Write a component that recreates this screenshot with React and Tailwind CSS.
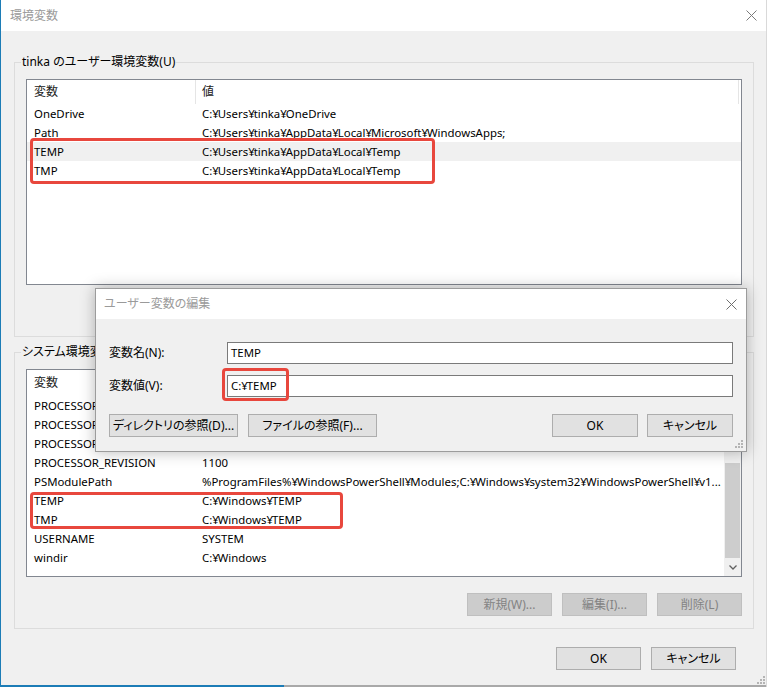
import React from "react";

const font = "font-['Noto_Sans','Noto_Sans_CJK_JP',sans-serif] [font-feature-settings:'palt']";

const userVars = [
  { name: "OneDrive", value: "C:¥Users¥tinka¥OneDrive" },
  { name: "Path", value: "C:¥Users¥tinka¥AppData¥Local¥Microsoft¥WindowsApps;" },
  { name: "TEMP", value: "C:¥Users¥tinka¥AppData¥Local¥Temp", selected: true },
  { name: "TMP", value: "C:¥Users¥tinka¥AppData¥Local¥Temp" },
];

const systemVars = [
  { name: "PROCESSOR_ARCHITECTURE", value: "AMD64" },
  { name: "PROCESSOR_IDENTIFIER", value: "Intel64 Family 6 Model 142 Stepping 10, GenuineIntel" },
  { name: "PROCESSOR_LEVEL", value: "6" },
  { name: "PROCESSOR_REVISION", value: "1100" },
  {
    name: "PSModulePath",
    value: "%ProgramFiles%¥WindowsPowerShell¥Modules;C:¥Windows¥system32¥WindowsPowerShell¥v1...",
  },
  { name: "TEMP", value: "C:¥Windows¥TEMP" },
  { name: "TMP", value: "C:¥Windows¥TEMP" },
  { name: "USERNAME", value: "SYSTEM" },
  { name: "windir", value: "C:¥Windows" },
];

// the yen sign is narrower in the Windows UI font
function Yen({ text }) {
  const parts = text.split("¥");
  return parts.map((p, i) => (
    <React.Fragment key={i}>
      {i > 0 && <span className="tracking-[-1px]">¥</span>}
      {p}
    </React.Fragment>
  ));
}

function CloseIcon({ color }) {
  return (
    <svg width="11" height="11" viewBox="0 0 11 11">
      <path d="M0.5 0.5L10.5 10.5M10.5 0.5L0.5 10.5" stroke={color} strokeWidth="1" />
    </svg>
  );
}

function Grip() {
  return (
    <svg width="8" height="8" viewBox="0 0 8 8">
      <rect x="6" y="0" width="2" height="2" fill="#b4b4b4" />
      <rect x="3" y="3" width="2" height="2" fill="#b4b4b4" />
      <rect x="6" y="3" width="2" height="2" fill="#b4b4b4" />
      <rect x="0" y="6" width="2" height="2" fill="#b4b4b4" />
      <rect x="3" y="6" width="2" height="2" fill="#b4b4b4" />
      <rect x="6" y="6" width="2" height="2" fill="#b4b4b4" />
    </svg>
  );
}

function Btn({ children, w, disabled }) {
  return (
    <button
      type="button"
      className={`${w} h-[23px] border leading-none whitespace-nowrap ${
        disabled
          ? "bg-[#cccccc] border-[#bfbfbf] text-[#838383]"
          : "bg-[#e1e1e1] border-[#adadad] text-black"
      }`}
    >
      {children}
    </button>
  );
}

function Row({ row }) {
  return (
    <div
      className={`flex h-[19px] items-center whitespace-nowrap text-[11.4px] ${
        row.selected ? "bg-[#f0f0f0]" : ""
      }`}
    >
      <div className="w-[169px] shrink-0 pl-[7px] overflow-hidden">{row.name}</div>
      <div className="flex-1 min-w-0 pl-[6px] overflow-hidden">
        <Yen text={row.value} />
      </div>
    </div>
  );
}

function Header({ h }) {
  return (
    <div className={`flex ${h} shrink-0 text-[#222]`}>
      <div className="w-[169px] shrink-0 pl-[7px] flex items-center border-r border-[#e5e5e5]">変数</div>
      <div className="w-[543px] shrink-0 pl-[6px] flex items-center border-r border-[#e5e5e5]">値</div>
    </div>
  );
}

export default function App() {
  return (
    <div className={`relative w-[767px] h-[687px] overflow-hidden bg-[#d9d9d9] text-[12px] text-black ${font}`}>
      {/* main window */}
      <div className="flex flex-col w-[766px] h-[687px] bg-[#f0f0f0] border-l border-[#1c7cb6]">
        <div className="flex items-center justify-between h-[31px] shrink-0 bg-white pl-[9px] pr-[9px]">
          <span className="text-[#9a9a9a]">環境変数</span>
          <CloseIcon color="#7a7a7a" />
        </div>

        <div className="flex-1 flex flex-col pl-[13px] pt-[23px]">
          <fieldset className="w-[740px] min-w-0 border border-[#dcdcdc] px-[11px] pt-[9px] pb-[12px]">
            <legend className="-ml-[5px] px-[1px] leading-[16px]">tinka のユーザー環境変数(U)</legend>
            <div className="h-[206px] border border-[#828790] bg-white flex flex-col overflow-hidden">
              <Header h="h-[24px]" />
              {userVars.map((r) => (
                <Row key={r.name} row={r} />
              ))}
            </div>
            <div className="flex justify-end gap-[10px] mt-[16px]">
              <Btn w="w-[85px]">新規(N)...</Btn>
              <Btn w="w-[85px]">編集(E)...</Btn>
              <Btn w="w-[85px]">削除(D)</Btn>
            </div>
          </fieldset>

          <fieldset className="w-[740px] min-w-0 mt-[7px] border border-[#dcdcdc] px-[11px] pt-[9px] pb-[12px]">
            <legend className="-ml-[5px] px-[1px] leading-[16px]">システム環境変数(S)</legend>
            <div className="h-[208px] w-[716px] border border-[#828790] bg-white flex overflow-hidden">
              <div className="flex-1 min-w-0 flex flex-col overflow-hidden">
                <Header h="h-[26px]" />
                {systemVars.map((r) => (
                  <Row key={r.name} row={r} />
                ))}
              </div>
              <div className="w-[17px] shrink-0 bg-[#f0f0f0] flex flex-col">
                <div className="h-[17px]" />
                <div className="flex-1" />
                <div className="h-[95px] mx-[1px] bg-[#cdcdcd]" />
                <div className="h-[18px] flex items-center justify-center">
                  <svg width="8" height="5" viewBox="0 0 8 5">
                    <path d="M0.5 0.5L4 4L7.5 0.5" stroke="#606060" strokeWidth="1.3" fill="none" />
                  </svg>
                </div>
              </div>
            </div>
            <div className="flex justify-end gap-[10px] mt-[16px]">
              <Btn w="w-[85px]" disabled>新規(W)...</Btn>
              <Btn w="w-[85px]" disabled>編集(I)...</Btn>
              <Btn w="w-[85px]" disabled>削除(L)</Btn>
            </div>
          </fieldset>

          <div className="w-[740px] flex justify-end gap-[10px] mt-[18px] pr-[18px]">
            <Btn w="w-[85px]">OK</Btn>
            <Btn w="w-[85px]">キャンセル</Btn>
          </div>
        </div>

        <div className="flex h-[2px] shrink-0">
          <div className="w-[283px] bg-[#1c7cb6]" />
          <div className="flex-1 bg-[#a9a9a9]" />
        </div>
      </div>

      <div className="absolute left-[757px] top-[676px]">
        <Grip />
      </div>

      {/* annotations */}
      <div className="absolute left-[30px] top-[138px] w-[405px] h-[46px] border-[3px] border-[#e8473d] rounded-[4px]" />
      <div className="absolute left-[30px] top-[492px] w-[313px] h-[37px] border-[3px] border-[#e8473d] rounded-[4px]" />

      {/* edit dialog */}
      <div className="absolute left-[95px] top-[288px] w-[652px] h-[164px] flex flex-col border border-[#9c9c9c] bg-[#f0f0f0] shadow-[0_0_14px_rgba(0,0,0,0.28)]">
        <div className="flex items-center justify-between h-[30px] shrink-0 bg-white pl-[8px] pr-[9px]">
          <span className="text-[#9a9a9a]">ユーザー変数の編集</span>
          <CloseIcon color="#6e6e6e" />
        </div>
        <div className="flex-1 flex flex-col px-[13px] pt-[23px] relative">
          <div className="flex items-center h-[22px]">
            <div className="w-[118px] shrink-0">変数名(N):</div>
            <div className="flex-1 h-[22px] border border-[#7a7a7a] bg-white pl-[3px] flex items-center text-[11.4px]">
              TEMP
            </div>
          </div>
          <div className="flex items-center h-[22px] mt-[11px]">
            <div className="w-[118px] shrink-0">変数値(V):</div>
            <div className="flex-1 h-[22px] border border-[#7a7a7a] bg-white pl-[3px] flex items-center text-[11.4px]">
              <Yen text="C:¥TEMP" />
            </div>
          </div>
          <div className="flex items-center mt-[17px]">
            <div className="flex gap-[10px]">
              <Btn w="w-[129px]">ディレクトリの参照(D)...</Btn>
              <Btn w="w-[129px]">ファイルの参照(F)...</Btn>
            </div>
            <div className="flex gap-[9px] ml-auto">
              <Btn w="w-[86px]">OK</Btn>
              <Btn w="w-[86px]">キャンセル</Btn>
            </div>
          </div>
          <div className="absolute right-[3px] bottom-[3px]">
            <Grip />
          </div>
        </div>
      </div>

      <div className="absolute left-[222px] top-[368px] w-[67px] h-[33px] border-[3px] border-[#e8473d] rounded-[4px]" />
    </div>
  );
}
